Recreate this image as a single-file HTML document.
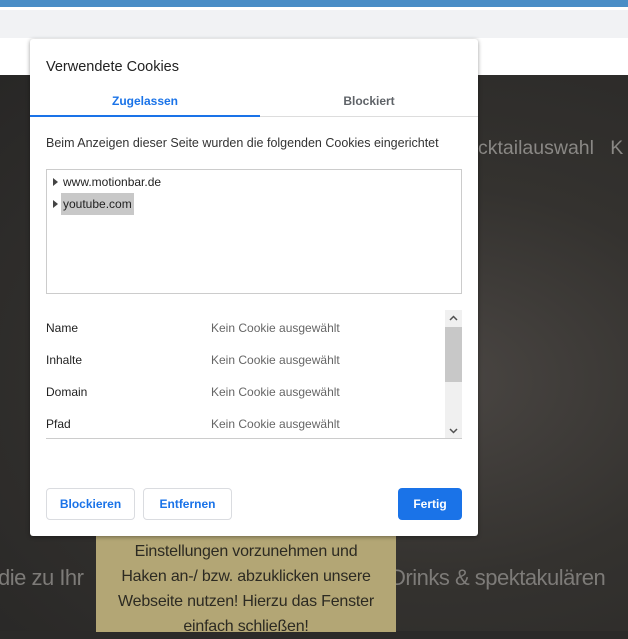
<!DOCTYPE html>
<html><head><style>
*{margin:0;padding:0;box-sizing:border-box}
body{width:628px;height:631px;overflow:hidden;position:relative;font-family:"Liberation Sans",sans-serif;background:#2b2a29}
.abs{position:absolute}
.f{font-family:"Liberation Sans",sans-serif}
</style></head><body>
<div class="abs" style="left:0;top:0;width:628px;height:7px;background:#4a8dc6"></div>
<div class="abs" style="left:0;top:7px;width:628px;height:3px;background:#fff"></div>
<div class="abs" style="left:0;top:10px;width:628px;height:28px;background:#f1f2f4"></div>
<div class="abs" style="left:0;top:38px;width:628px;height:37px;background:#fff"></div>
<div class="abs" style="left:0;top:75px;width:628px;height:556px;background:radial-gradient(ellipse at 70% 55%,#4a4643 0%,#34322f 45%,#282726 100%)"></div>
<div class="abs" style="left:478px;top:137px;color:#8a8885;font-size:19.5px;white-space:nowrap">cktailauswahl&nbsp;&nbsp;&nbsp;K</div>
<div class="abs" style="left:-2px;top:565px;color:#7d7b78;font-size:22px;white-space:nowrap;letter-spacing:-0.5px">die zu Ihr</div>
<div class="abs" style="left:390px;top:565px;color:#7d7b78;font-size:22px;white-space:nowrap;letter-spacing:-0.5px">Drinks &amp; spektakulären</div>
<div class="abs" style="left:96px;top:532px;width:300px;height:100px;background:#b3a675;color:#2c2a22;font-size:16px;line-height:25px;text-align:center;padding-top:7px;letter-spacing:-0.2px">Einstellungen vorzunehmen und<br>Haken an-/ bzw. abzuklicken unsere<br>Webseite nutzen! Hierzu das Fenster<br>einfach schließen!</div>
<div class="abs f" style="left:30px;top:39px;width:448px;height:497px;background:#fff;border-radius:3px;box-shadow:0 1px 4px rgba(0,0,0,.4)">
<div class="abs" style="left:16px;top:20px;font-size:14.5px;color:#222">Verwendete Cookies</div>
<div class="abs" style="left:0;top:55px;width:230px;text-align:center;font-size:12px;font-weight:bold;color:#1a73e8">Zugelassen</div>
<div class="abs" style="left:230px;top:55px;width:218px;text-align:center;font-size:12px;font-weight:bold;color:#5f6368">Blockiert</div>
<div class="abs" style="left:0;top:77px;width:448px;height:1px;background:#ddd"></div>
<div class="abs" style="left:0;top:76px;width:230px;height:2px;background:#1a73e8"></div>
<div class="abs" style="left:16px;top:97px;font-size:12.5px;color:#333">Beim Anzeigen dieser Seite wurden die folgenden Cookies eingerichtet</div>
<div class="abs" style="left:16px;top:130px;width:416px;height:125px;border:1px solid #ccc">
<div class="abs" style="left:6px;top:8px;width:0;height:0;border-left:5px solid #444;border-top:4px solid transparent;border-bottom:4px solid transparent"></div>
<div class="abs" style="left:16px;top:5px;font-size:12px;color:#222">www.motionbar.de</div>
<div class="abs" style="left:6px;top:30px;width:0;height:0;border-left:5px solid #444;border-top:4px solid transparent;border-bottom:4px solid transparent"></div>
<div class="abs" style="left:14px;top:23px;height:22px;width:73px;background:#c8c8c8"></div>
<div class="abs" style="left:16px;top:27px;font-size:12px;color:#222">youtube.com</div>
</div>
<div class="abs" style="left:16px;top:282px;font-size:12px;color:#222">Name</div>
<div class="abs" style="left:16px;top:314px;font-size:12px;color:#222">Inhalte</div>
<div class="abs" style="left:16px;top:346px;font-size:12px;color:#222">Domain</div>
<div class="abs" style="left:16px;top:378px;font-size:12px;color:#222">Pfad</div>
<div class="abs" style="left:181px;top:282px;font-size:12px;color:#666">Kein Cookie ausgewählt</div>
<div class="abs" style="left:181px;top:314px;font-size:12px;color:#666">Kein Cookie ausgewählt</div>
<div class="abs" style="left:181px;top:346px;font-size:12px;color:#666">Kein Cookie ausgewählt</div>
<div class="abs" style="left:181px;top:378px;font-size:12px;color:#666">Kein Cookie ausgewählt</div>
<div class="abs" style="left:415px;top:271px;width:17px;height:128px;background:#f0f0f0"></div>
<div class="abs" style="left:415px;top:288px;width:17px;height:55px;background:#c8c8c8"></div>
<svg class="abs" style="left:419px;top:275px" width="9" height="8"><path d="M1 6 L4.5 2.5 L8 6" fill="none" stroke="#505050" stroke-width="1.5"/></svg>
<svg class="abs" style="left:419px;top:388px" width="9" height="8"><path d="M1 2 L4.5 5.5 L8 2" fill="none" stroke="#505050" stroke-width="1.5"/></svg>
<div class="abs" style="left:16px;top:399px;width:416px;height:1px;background:#ccc"></div>
<div class="abs" style="left:16px;top:449px;width:89px;height:32px;border:1px solid #dadce0;border-radius:4px;text-align:center;line-height:30px;font-size:12px;font-weight:bold;color:#1a73e8">Blockieren</div>
<div class="abs" style="left:113px;top:449px;width:89px;height:32px;border:1px solid #dadce0;border-radius:4px;text-align:center;line-height:30px;font-size:12px;font-weight:bold;color:#1a73e8">Entfernen</div>
<div class="abs" style="left:368px;top:449px;width:64px;height:32px;background:#1a73e8;border-radius:4px;text-align:center;line-height:32px;font-size:12px;font-weight:bold;color:#fff">Fertig</div>
</div>
</body></html>
